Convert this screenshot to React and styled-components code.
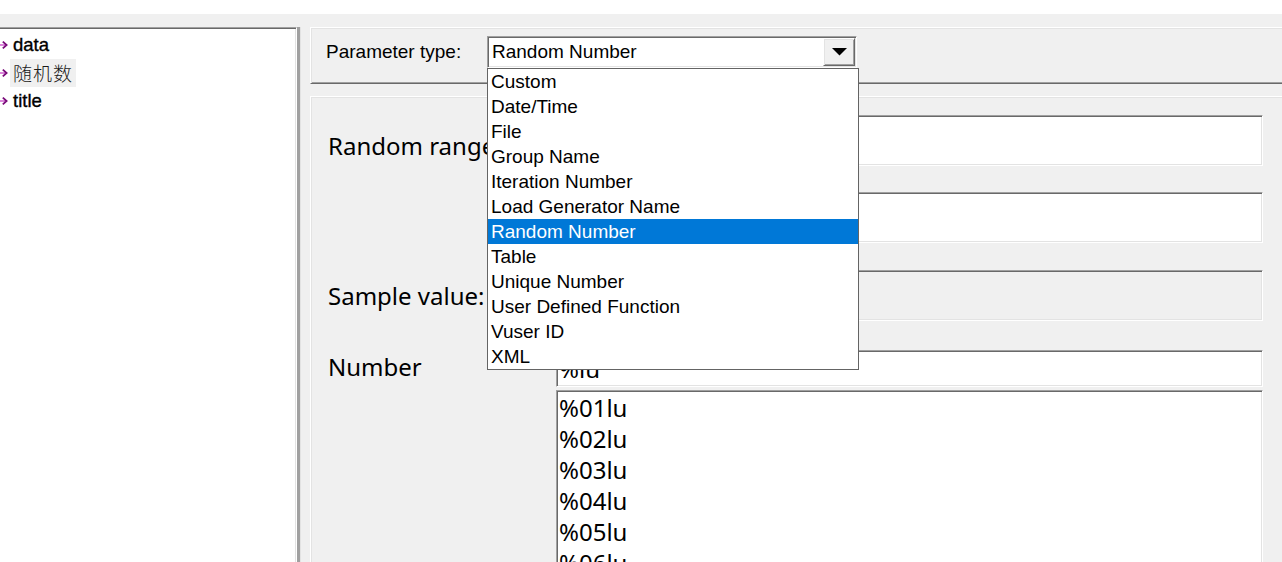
import React from "react";
import styled, { createGlobalStyle } from "styled-components";

const Global = createGlobalStyle`
  html, body { margin: 0; padding: 0; background: #fff; overflow: hidden; }
  body { font-family: "Liberation Sans", Arial, sans-serif; color: #000; }
  #root { width: 1282px; height: 562px; overflow: hidden; }
`;

const sunken = `
  border: 1px solid;
  border-color: #a0a0a0 #ffffff #ffffff #a0a0a0;
  box-shadow: inset 1px 1px #696969, inset -1px -1px #e3e3e3;
`;
const raised = `
  border: 1px solid;
  border-color: #ffffff #696969 #696969 #ffffff;
  box-shadow: inset 1px 1px #e3e3e3, inset -1px -1px #a0a0a0;
`;

const Page = styled.div`
  width: 1300px;
  height: 620px;
  display: flex;
  flex-direction: column;
  background: #fff;
`;
const TopBand = styled.div`
  height: 14px;
  flex: none;
  background: #fff;
`;
const Body = styled.div`
  flex: 1;
  min-height: 0;
  display: flex;
  background: #f0f0f0;
  padding-top: 13px;
`;

const Tree = styled.div`
  width: 297px;
  flex: none;
  box-sizing: border-box;
  background: #fff;
  border-top: 1px solid #a0a0a0;
  border-right: 1px solid #ffffff;
  box-shadow: inset 0 1px #696969, inset -1px 0 #e3e3e3;
  padding-top: 3px;
  display: flex;
  flex-direction: column;
`;
const TreeRow = styled.div`
  height: 28px;
  display: flex;
  align-items: center;
  gap: 1px;
`;
const TreeLabel = styled.span`
  height: 28px;
  line-height: 28px;
  padding: 0 3px;
  font-family: ${(p) =>
    p.$cjk ? '"Noto Sans CJK SC", "Noto Sans", sans-serif' : '"Liberation Sans", Arial, sans-serif'};
  font-size: ${(p) => (p.$cjk ? "19px" : "18.5px")};
  font-weight: ${(p) => (p.$cjk ? 300 : 400)};
  letter-spacing: ${(p) => (p.$cjk ? "1px" : "0")};
  -webkit-text-stroke: ${(p) => (p.$cjk ? "0" : "0.35px #000")};
  color: ${(p) => (p.$cjk ? "#1a1a1a" : "#000")};
  background: ${(p) => (p.$selected ? "#f0f0f0" : "transparent")};
`;
const Splitter = styled.div`
  width: 3px;
  flex: none;
  background: #a0a0a0;
  border-right: 1px solid #e3e3e3;
  margin-right: 9px;
`;

const RightCol = styled.div`
  flex: 1;
  min-width: 0;
  display: flex;
  flex-direction: column;
  gap: 12px;
`;
const TypeGroup = styled.div`
  ${raised}
  flex: none;
  height: 57px;
  box-sizing: border-box;
  padding: 8px 0 0 15px;
  display: flex;
  align-items: flex-start;
  background: #f0f0f0;
  position: relative;
  z-index: 5;
`;
const TypeLabel = styled.div`
  width: 161px;
  flex: none;
  line-height: 32px;
  font-size: 19px;
`;
const Combo = styled.div`
  ${sunken}
  position: relative;
  width: 370px;
  height: 32px;
  box-sizing: border-box;
  padding: 1px;
  background: #fff;
  display: flex;
`;
const ComboText = styled.div`
  flex: 1;
  padding-left: 3px;
  line-height: 28px;
  font-size: 19px;
`;
const ComboButton = styled.div`
  ${raised}
  width: 32px;
  box-sizing: border-box;
  background: #f0f0f0;
  display: flex;
  align-items: center;
  justify-content: center;
`;
const DropList = styled.div`
  position: absolute;
  top: calc(100% + 1px);
  left: -1px;
  width: 372px;
  box-sizing: border-box;
  background: #fff;
  border: 1px solid #646464;
  z-index: 20;
`;
const DropItem = styled.div`
  height: 25px;
  line-height: 25px;
  padding-left: 3px;
  font-size: 19px;
  white-space: nowrap;
  background: ${(p) => (p.$active ? "#0078d7" : "transparent")};
  color: ${(p) => (p.$active ? "#fff" : "#000")};
`;

const SettingsGroup = styled.div`
  ${raised}
  flex: none;
  background: #f0f0f0;
  padding: 18px 0 40px 17px;
  display: flex;
  flex-direction: column;
`;
const FormRow = styled.div`
  display: grid;
  grid-template-columns: 228px 707px;
  margin-top: ${(p) => p.$gap || 0}px;
`;
const FieldLabel = styled.div`
  align-self: center;
  margin-top: ${(p) => p.$shift || 0}px;
  font-family: "Noto Sans", "Open Sans", sans-serif;
  font-size: 24px;
  white-space: nowrap;
`;
const Field = styled.div`
  ${sunken}
  height: ${(p) => p.$h || 51}px;
  box-sizing: border-box;
  background: ${(p) => (p.$disabled ? "#f0f0f0" : "#fff")};
  padding: 1px 0 0 2px;
`;
const FieldText = styled.div`
  font-family: "Noto Sans", "Open Sans", sans-serif;
  font-size: 24px;
  line-height: 33px;
`;
const ListBox = styled.div`
  ${sunken}
  height: 240px;
  box-sizing: border-box;
  background: #fff;
  padding: 1px 0 0 2px;
  overflow: hidden;
`;
const ListItem = styled.div`
  font-family: "Noto Sans", "Open Sans", sans-serif;
  font-size: 24px;
  line-height: 31px;
`;

const TreeIcon = () => (
  <svg width="9" height="10" viewBox="0 0 9 10" style={{ flex: "none" }}>
    <path d="M0 5 H5" stroke="#d36ad3" strokeWidth="1.6" />
    <path d="M2.8 1.6 L6.6 5 L2.8 8.4" fill="none" stroke="#7a0a7a" strokeWidth="1.8" />
  </svg>
);

const Arrow = () => (
  <svg width="15" height="8" viewBox="0 0 15 8">
    <polygon points="0,0 15,0 7.5,7.5" fill="#000" />
  </svg>
);

const types = [
  "Custom",
  "Date/Time",
  "File",
  "Group Name",
  "Iteration Number",
  "Load Generator Name",
  "Random Number",
  "Table",
  "Unique Number",
  "User Defined Function",
  "Vuser ID",
  "XML",
];

const formats = ["%01lu", "%02lu", "%03lu", "%04lu", "%05lu", "%06lu", "%07lu", "%08lu"];

export default function App() {
  return (
    <>
      <Global />
      <Page>
        <TopBand />
        <Body>
          <Tree>
            <TreeRow>
              <TreeIcon />
              <TreeLabel>data</TreeLabel>
            </TreeRow>
            <TreeRow>
              <TreeIcon />
              <TreeLabel $cjk $selected>随机数</TreeLabel>
            </TreeRow>
            <TreeRow>
              <TreeIcon />
              <TreeLabel>title</TreeLabel>
            </TreeRow>
          </Tree>
          <Splitter />
          <RightCol>
            <TypeGroup>
              <TypeLabel>Parameter type:</TypeLabel>
              <Combo>
                <ComboText>Random Number</ComboText>
                <ComboButton>
                  <Arrow />
                </ComboButton>
                <DropList>
                  {types.map((t) => (
                    <DropItem key={t} $active={t === "Random Number"}>
                      {t}
                    </DropItem>
                  ))}
                </DropList>
              </Combo>
            </TypeGroup>
            <SettingsGroup>
              <FormRow>
                <FieldLabel $shift={9}>Random range:</FieldLabel>
                <Field />
              </FormRow>
              <FormRow $gap={26}>
                <div />
                <Field />
              </FormRow>
              <FormRow $gap={27}>
                <FieldLabel>Sample value:</FieldLabel>
                <Field $disabled />
              </FormRow>
              <FormRow $gap={29}>
                <FieldLabel $shift={-5}>Number</FieldLabel>
                <Field $h={37}>
                  <FieldText>%lu</FieldText>
                </Field>
              </FormRow>
              <FormRow $gap={3}>
                <div />
                <ListBox>
                  {formats.map((f) => (
                    <ListItem key={f}>{f}</ListItem>
                  ))}
                </ListBox>
              </FormRow>
            </SettingsGroup>
          </RightCol>
        </Body>
      </Page>
    </>
  );
}
